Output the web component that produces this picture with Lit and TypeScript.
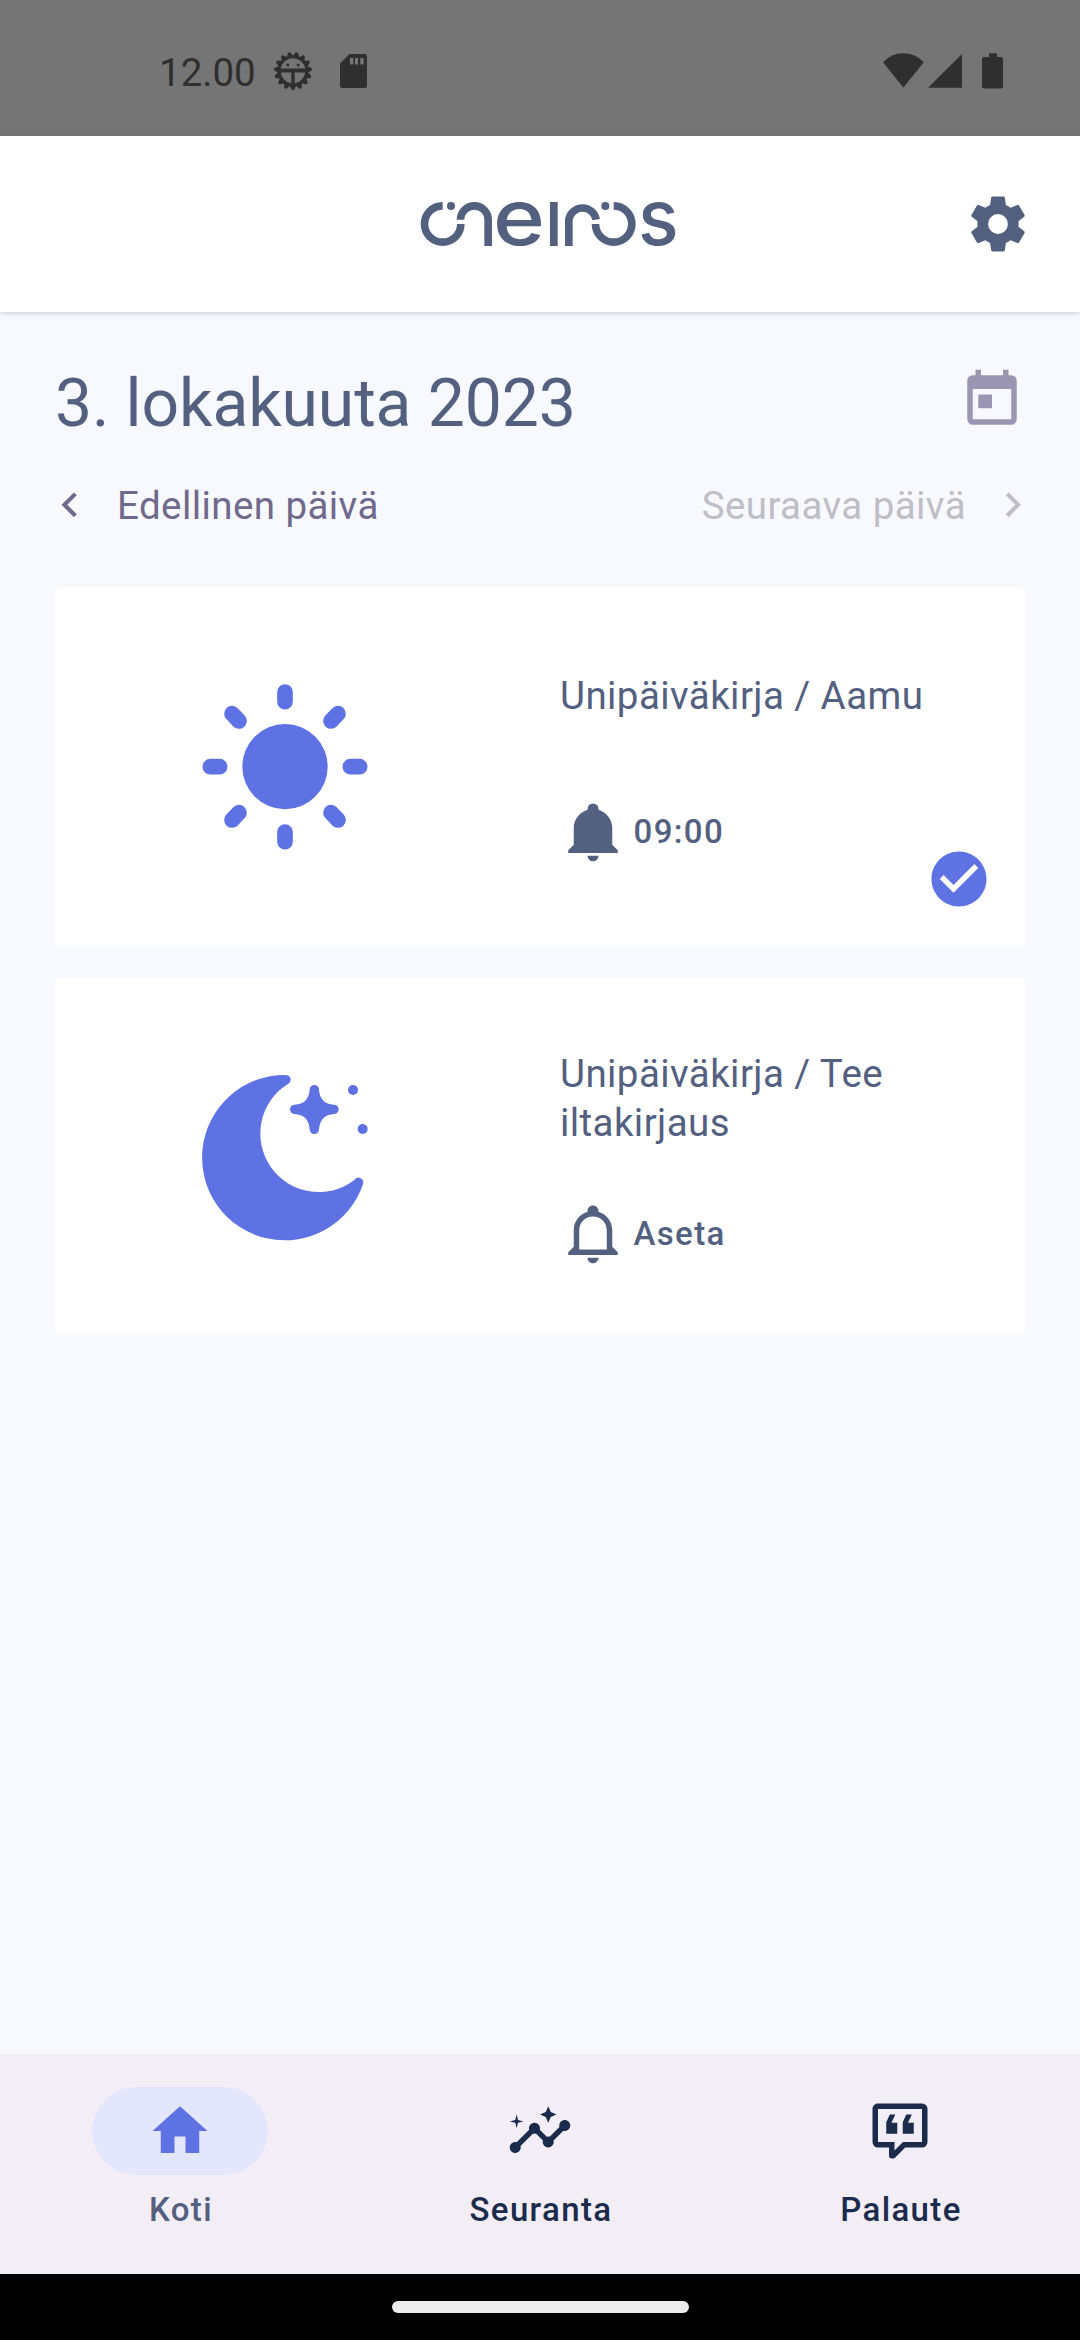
import { LitElement, html, css, svg, nothing } from "lit";
import { customElement, property } from "lit/decorators.js";

const ICONS: Record<string, string> = {
  cog: "M19.43 12.98c.04-.32.07-.64.07-.98s-.03-.66-.07-.98l2.11-1.65c.19-.15.24-.42.12-.64l-2-3.46c-.12-.22-.39-.3-.61-.22l-2.49 1c-.52-.4-1.08-.73-1.69-.98l-.38-2.65C14.46 2.18 14.25 2 14 2h-4c-.25 0-.46.18-.49.42l-.38 2.65c-.61.25-1.17.59-1.69.98l-2.49-1c-.23-.09-.49 0-.61.22l-2 3.46c-.13.22-.07.49.12.64l2.11 1.65c-.04.32-.07.65-.07.98s.03.66.07.98l-2.11 1.65c-.19.15-.24.42-.12.64l2 3.46c.12.22.39.3.61.22l2.49-1c.52.4 1.08.73 1.69.98l.38 2.65c.03.24.24.42.49.42h4c.25 0 .46-.18.49-.42l.38-2.65c.61-.25 1.17-.59 1.69-.98l2.49 1c.23.09.49 0 .61-.22l2-3.46c.12-.22.07-.49-.12-.64l-2.11-1.65zM12 15.6a3.6 3.6 0 1 1 0-7.2 3.6 3.6 0 0 1 0 7.2z",
  calendar: "M7,10H12V15H7M19,19H5V8H19M19,3H18V1H16V3H8V1H6V3H5C3.89,3 3,3.9 3,5V19A2,2 0 0,0 5,21H19A2,2 0 0,0 21,19V5A2,2 0 0,0 19,3Z",
  left: "M15.41,16.58L10.83,12L15.41,7.41L14,6L8,12L14,18L15.41,16.58Z",
  right: "M8.59,16.58L13.17,12L8.59,7.41L10,6L16,12L10,18L8.59,16.58Z",
  bell: "M21,19V20H3V19L5,17V11C5,7.9 7.03,5.17 10,4.29C10,4.19 10,4.1 10,4A2,2 0 0,1 12,2A2,2 0 0,1 14,4C14,4.1 14,4.19 14,4.29C16.97,5.17 19,7.9 19,11V17L21,19M14,21A2,2 0 0,1 12,23A2,2 0 0,1 10,21",
  bellOutline: "M10 21H14C14 22.1 13.1 23 12 23S10 22.1 10 21M21 19V20H3V19L5 17V11C5 7.9 7 5.2 10 4.3V4C10 2.9 10.9 2 12 2S14 2.9 14 4V4.3C17 5.2 19 7.9 19 11V17L21 19M17 11C17 8.2 14.8 6 12 6S7 8.2 7 11V18H17V11Z",
  check: "M12 2C6.5 2 2 6.5 2 12S6.5 22 12 22 22 17.5 22 12 17.5 2 12 2M10 17L5 12L6.41 10.59L10 14.17L17.59 6.58L19 8L10 17Z",
  home: "M10,20V14H14V20H19V12H22L12,3L2,12H5V20H10Z",
  insights: "M21 8c-1.45 0-2.26 1.44-1.93 2.51l-3.55 3.56c-.3-.09-.74-.09-1.04 0l-2.55-2.55C12.27 10.45 11.46 9 10 9c-1.45 0-2.27 1.44-1.93 2.52l-4.56 4.55C2.44 15.74 1 16.55 1 18c0 1.1.9 2 2 2 1.45 0 2.26-1.44 1.93-2.51l4.55-4.56c.3.09.74.09 1.04 0l2.55 2.55C12.73 16.55 13.54 18 15 18c1.45 0 2.27-1.44 1.93-2.52l3.56-3.55c1.07.33 2.51-.48 2.51-1.93 0-1.1-.9-2-2-2zM15 9l.94-2.07L18 6l-2.06-.93L15 3l-.92 2.07L12 6l2.08.93zM3.5 11L4 9l2-.5L4 8l-.5-2L3 8l-2 .5L3 9z",
  quote: "M9,22A1,1 0 0,1 8,21V18H4A2,2 0 0,1 2,16V4C2,2.89 2.9,2 4,2H20A2,2 0 0,1 22,4V16A2,2 0 0,1 20,18H13.9L10.2,21.71C10,21.9 9.75,22 9.5,22V22H9M10,16V19.08L13.08,16H20V4H4V16H10M16.3,6L14.9,9H17V13H13V8.8L14.3,6H16.3M10.3,6L8.9,9H11V13H7V8.8L8.3,6H10.3Z",
};

@customElement("md-icon")
class MdIcon extends LitElement {
  @property() name = "home";
  static styles = css`
    :host { display: block; width: 66px; height: 66px; flex: none; }
    svg { display: block; width: 100%; height: 100%; fill: currentColor; }
  `;
  render() {
    return html`<svg viewBox="0 0 24 24"><path d=${ICONS[this.name]} /></svg>`;
  }
}

@customElement("status-bar")
class StatusBar extends LitElement {
  static styles = css`
    :host {
      display: flex; align-items: center; box-sizing: border-box; height: 136px;
      padding: 6px 76px 0 159px; background: #757575; color: #2f2f2f;
      font: 400 38.5px/46px Roboto, sans-serif;
    }
    .clock { width: 113px; padding-top: 3px; }
    .spacer { flex: 1; }
    svg { display: block; flex: none; fill: #2f2f2f; }
  `;
  render() {
    const teeth = Array.from({ length: 15 }, (_, i) => i * 24 + 12);
    return html`
      <span class="clock">12.00</span>
      <svg width="42" height="42" viewBox="-21 -21 42 42">
        ${teeth.map((a) => svg`<path transform="rotate(${a})" d="M-3.400 -14L-1.700 -18Q0 -20.400 1.700 -18L3.400 -14Z" />`)}
        <circle r="15.500" />
        <path fill="#757575" d="M-12.300 -2.500A12.500 12.500 0 0 1 12.300 -2.500Z" />
        <path fill="#757575" d="M-12.200 1.500H-1.700V12.300A12.400 12.400 0 0 1 -12.200 1.500ZM12.200 1.500H1.700V12.300A12.400 12.400 0 0 0 12.200 1.500Z" />
        <circle cx="-5.200" cy="-6" r="1.500" /><circle cx="5.200" cy="-6" r="1.500" />
      </svg>
      <svg width="80" height="42" viewBox="314 50 80 42">
        <path d="M349.500 54H364.500Q367 54 367 56.500V85.500Q367 88 364.500 88H342.500Q340 88 340 85.500V63.500Z" />
        <path fill="#757575" d="M350 58h3.300v6.500h-3.300zM355 58h3v6.500h-3zM360.300 58h3.300v6.500h-3.300z" />
      </svg>
      <span class="spacer"></span>
      <svg width="122" height="42" viewBox="882 50 122 42">
        <path d="M903.400 87.500L883 62.300Q891.500 53.300 903.400 53.300T923.800 62.300Z" />
        <path d="M928 87.700H962V54Z" />
        <path d="M989 53.300H997V57H1001Q1003 57 1003 59V86.500Q1003 88.500 1001 88.500H984Q982 88.500 982 86.500V59Q982 57 984 57H989Z" />
      </svg>
    `;
  }
}

@customElement("app-header")
class AppHeader extends LitElement {
  static styles = css`
    :host {
      display: flex; align-items: center; justify-content: space-between; box-sizing: border-box;
      height: 176px; padding: 0 49px 0 420px; background: #fff; color: #53607f;
      box-shadow: 0 1px 5px rgba(0, 0, 0, 0.2); position: relative;
    }
    .logo { display: block; fill: currentColor; }
    .arc { fill: none; stroke: currentColor; stroke-width: 23; }
    .letter { font: 500 232px Inter, sans-serif; }
  `;
  render() {
    return html`
      <svg class="logo" width="270" height="120" viewBox="60 -49 810 360">
        <path class="arc" d="M128 76.500A54.500 54.500 0 1 0 182.500 131" />
        <circle cx="153" cy="77" r="12" />
        <path class="arc" d="M181.500 118A41.500 41.500 0 0 1 264.500 118V197" />
        <text class="letter" x="279" y="194" textLength="156" lengthAdjust="spacingAndGlyphs">e</text>
        <rect x="450" y="65" width="23" height="132" />
        <path class="arc" d="M506.500 197V118A41.500 41.500 0 0 1 588.500 118" />
        <circle cx="616" cy="77" r="12" />
        <path class="arc" d="M586.500 131A54.500 54.500 0 1 0 641 76.500" />
        <text class="letter" x="714" y="194" textLength="122" lengthAdjust="spacingAndGlyphs">s</text>
      </svg>
      <md-icon name="cog"></md-icon>
    `;
  }
}

@customElement("diary-card")
class DiaryCard extends LitElement {
  @property() label = "";
  @property() time = "";
  @property() kind: "sun" | "moon" = "sun";
  @property({ type: Boolean }) done = false;
  static styles = css`
    :host {
      display: grid; grid-template-columns: 505px 1fr; position: relative; height: 357.5px;
      background: #fff; border-radius: 3px; color: #53607f;
    }
    .art { display: block; width: 210px; height: 210px; margin: 73px 0 0 125px; fill: #5e72e4; }
    .rays { stroke: #5e72e4; stroke-width: 47; stroke-linecap: round; }
    .body { padding: 84px 60px 0 0; }
    .body.moon { padding-top: 71.500px; }
    .title { font: 400 38.5px/49px Roboto, sans-serif; letter-spacing: 0.42px; margin-bottom: 77.500px; }
    .moon .title { margin-bottom: 53px; }
    .alarm {
      display: flex; align-items: center; gap: 7.500px;
      font: 500 33px/44px Roboto, sans-serif; letter-spacing: 1.375px;
    }
    .alarm span { padding-top: 2px; }
    .badge { position: absolute; right: 33px; bottom: 32.500px; color: #5e72e4; }
  `;
  private art() {
    return this.kind === "sun"
      ? svg`<circle cx="315" cy="320" r="128" />
          <path class="rays" d="M315 96V125M315 516V545M91 320H119M511 320H539M156 161L177 183M474 161L453 183M177 458L156 480M453 458L474 480" />`
      : svg`<path d="M315 72A248 248 0 1 0 549 400Q553 384 538 380Q530 378 522 388A175.500 175.500 0 1 1 325 98Q336 90 330 78Q326 72 315 72Z" />
          <path d="M389 116A14 14 0 0 1 417 116Q420 158 462 161A14 14 0 0 1 462 189Q420 192 417 235A14 14 0 0 1 389 235Q386 192 344 189A14 14 0 0 1 344 161Q386 158 389 116Z" />
          <circle cx="519" cy="117" r="15" /><circle cx="548" cy="234" r="15" />`;
  }
  render() {
    return html`
      <svg class="art" viewBox="0 0 630 630">${this.art()}</svg>
      <div class="body ${this.kind}">
        <div class="title">${this.label}</div>
        <div class="alarm">
          <md-icon name=${this.done ? "bell" : "bellOutline"}></md-icon><span>${this.time}</span>
        </div>
      </div>
      ${this.done ? html`<md-icon class="badge" name="check"></md-icon>` : nothing}
    `;
  }
}

@customElement("nav-bar")
class NavBar extends LitElement {
  static styles = css`
    :host {
      display: grid; grid-template-columns: repeat(3, 1fr); box-sizing: border-box;
      height: 220px; padding-top: 32.500px; background: #f3edf5; color: #1a2b4b;
      font: 500 33px/44px Roboto, sans-serif; letter-spacing: 1.375px;
    }
    .item { display: flex; flex-direction: column; align-items: center; gap: 13.500px; }
    .item span { padding-left: 2px; }
    .pill {
      display: flex; align-items: center; justify-content: center;
      width: 176px; height: 88px; border-radius: 44px;
    }
    .active { color: #53607f; }
    .active .pill { background: #e4e7fc; color: #5e72e4; }
  `;
  render() {
    const items = [["home", "Koti"], ["insights", "Seuranta"], ["quote", "Palaute"]];
    return html`${items.map(([icon, label], i) => html`
      <div class="item ${i === 0 ? "active" : ""}">
        <div class="pill"><md-icon name=${icon}></md-icon></div>
        <span>${label}</span>
      </div>`)}`;
  }
}

@customElement("app-root")
class AppRoot extends LitElement {
  static styles = css`
    :host {
      display: flex; flex-direction: column; width: 1080px; height: 2340px; overflow: hidden;
      background: #f8f9fe; font-family: Roboto, sans-serif;
    }
    main { flex: 1; padding: 53px 55px 0; }
    .date-row { display: flex; justify-content: space-between; height: 78px; color: #53607f; }
    .date { font: 400 66px/78px Roboto, sans-serif; letter-spacing: -0.1px; }
    .date-row md-icon { color: #9a96b2; margin-top: 2px; }
    .days {
      display: flex; align-items: center; height: 50px; margin: 37px -12.500px 57px -10px;
      font: 400 38.5px/50px Roboto, sans-serif; letter-spacing: 0.42px; color: #6f6a8c;
    }
    .days span { padding-top: 1px; }
    .days md-icon { width: 49.500px; height: 49.500px; }
    .days .prev { flex: 1; padding-left: 22.500px; }
    .days .next { padding-right: 22px; }
    .off { color: #bebfc6; }
    .cards { display: grid; gap: 33px; }
    .gesture { display: flex; height: 66px; align-items: center; justify-content: center; background: #000; }
    .handle { width: 297px; height: 12px; border-radius: 6px; background: #ececec; }
  `;
  render() {
    return html`
      <status-bar></status-bar>
      <app-header></app-header>
      <main>
        <div class="date-row">
          <span class="date">3. lokakuuta 2023</span>
          <md-icon name="calendar"></md-icon>
        </div>
        <div class="days">
          <md-icon name="left"></md-icon>
          <span class="prev">Edellinen päivä</span>
          <span class="next off">Seuraava päivä</span>
          <md-icon class="off" name="right"></md-icon>
        </div>
        <div class="cards">
          <diary-card kind="sun" label="Unipäiväkirja / Aamu" time="09:00" done></diary-card>
          <diary-card kind="moon" label="Unipäiväkirja / Tee iltakirjaus" time="Aseta"></diary-card>
        </div>
      </main>
      <nav-bar></nav-bar>
      <div class="gesture"><div class="handle"></div></div>
    `;
  }
}
